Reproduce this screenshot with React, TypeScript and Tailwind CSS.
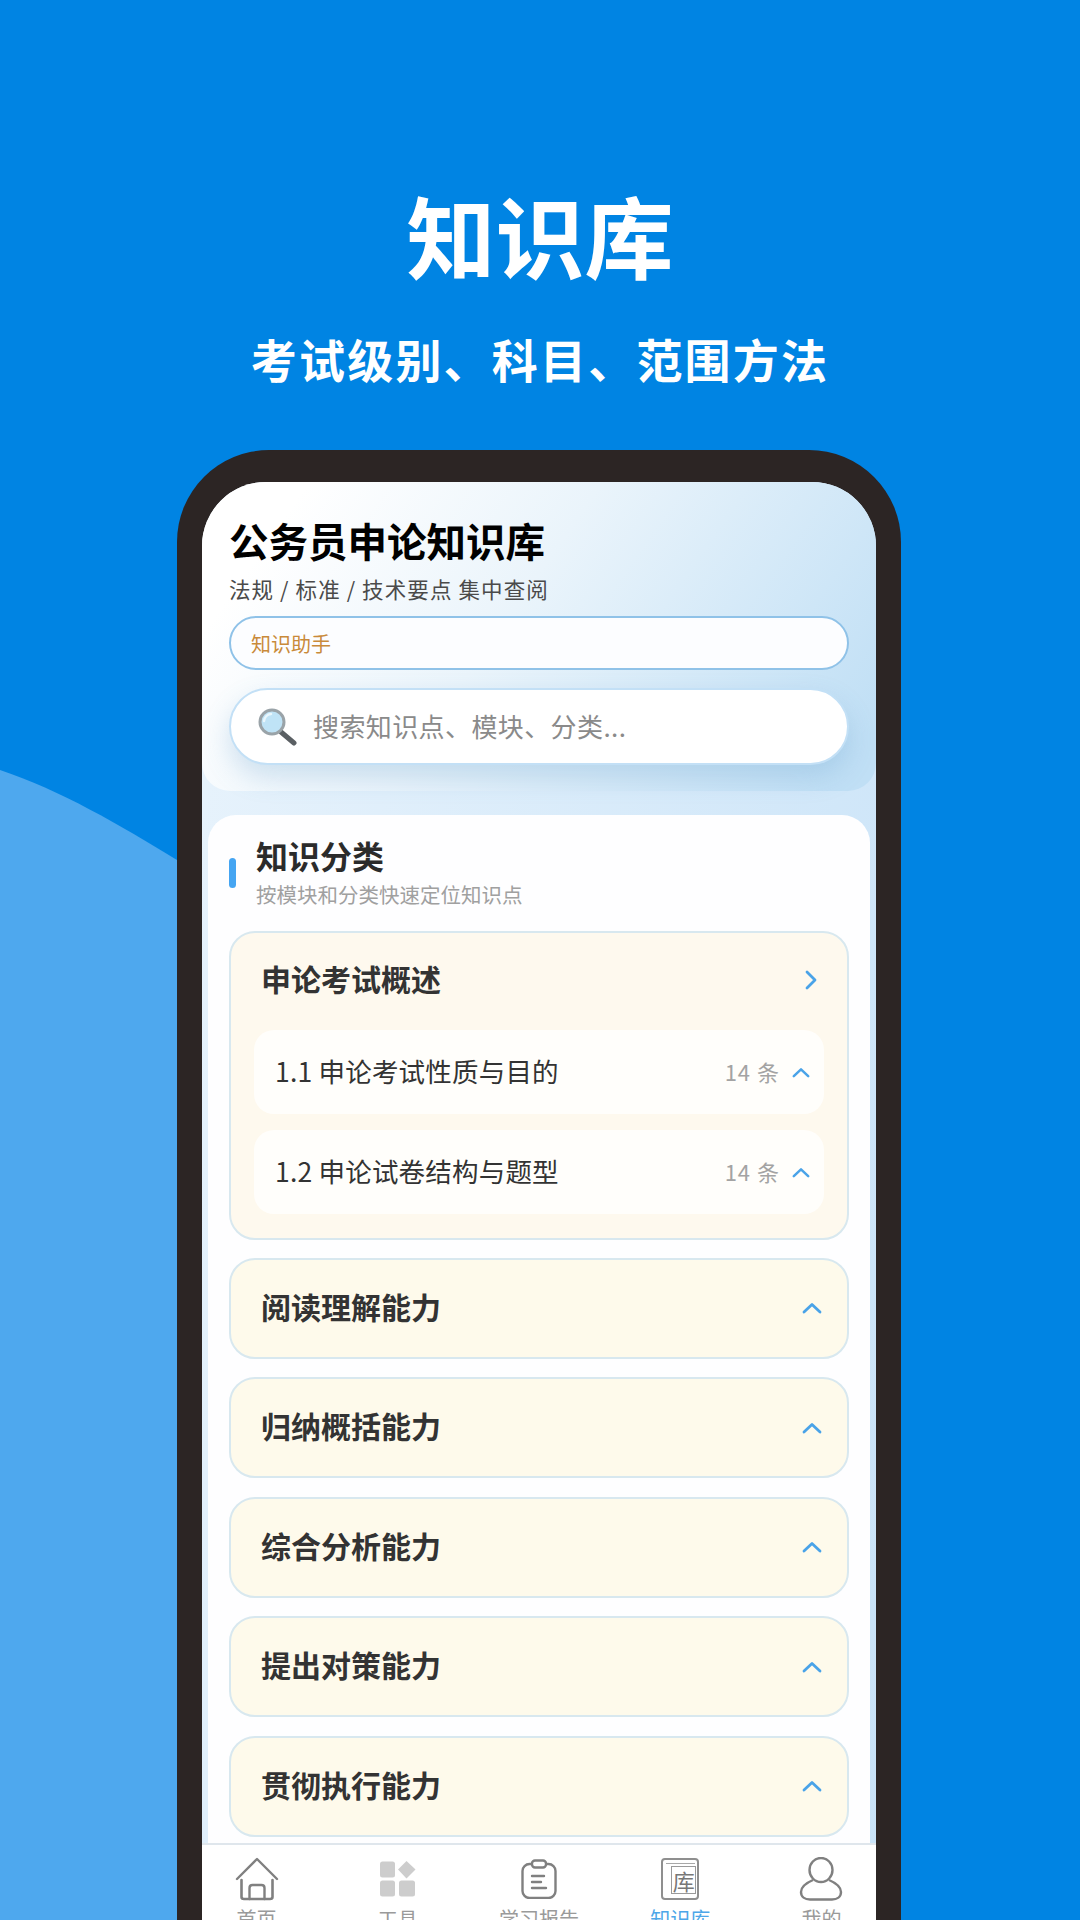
const FONT = "font-['Noto_Sans_CJK_SC','Noto_Sans',sans-serif]"

function ChevronUp({ className }: { className: string }) {
  return (
    <svg viewBox="0 0 20 12" fill="none" className={className}>
      <path d="M2 10 L10 2.5 L18 10" stroke="#4aa3e8" strokeWidth="2.8" strokeLinecap="round" strokeLinejoin="round" />
    </svg>
  )
}

function Magnifier() {
  return (
    <svg viewBox="0 0 40 38" className="w-[40px] h-[38px] shrink-0">
      <path d="M24 24 L37 35" stroke="#5a5f63" strokeWidth="5" strokeLinecap="round" />
      <circle cx="15" cy="14" r="12" fill="#bfe3f6" stroke="#9aa3a8" strokeWidth="3" />
      <path d="M7 13 A8 8 0 0 1 14 6" stroke="#eaf7fd" strokeWidth="2.5" fill="none" strokeLinecap="round" />
    </svg>
  )
}

function HomeIcon() {
  return (
    <svg viewBox="0 0 44 44" fill="none" stroke="#808080" strokeWidth="2.4" strokeLinecap="round" strokeLinejoin="round" className="w-[44px] h-[44px]">
      <path d="M2 22 L22 2 L42 22" />
      <path d="M6.500 23 V40 Q6.500 42 9 42 H35 Q37.500 42 37.500 40 V23" strokeWidth="2.6" />
      <path d="M14.500 42 V31 Q14.500 28 17.500 28 H26.500 Q29.500 28 29.500 31 V42" />
    </svg>
  )
}

function ToolsIcon() {
  return (
    <svg viewBox="0 0 36 36" fill="#cdcdcd" className="w-[36px] h-[36px]">
      <rect x="0" y="0.500" width="15" height="16" rx="2.500" />
      <path d="M26.500 0 L35.500 8.500 L26.500 17.500 L18 8.500 Z" />
      <rect x="0" y="19.500" width="15" height="16" rx="2.500" />
      <rect x="19" y="19.500" width="16" height="16" rx="2.500" />
    </svg>
  )
}

function ReportIcon() {
  return (
    <svg viewBox="0 0 36 40" fill="none" stroke="#808080" strokeWidth="2.4" strokeLinecap="round" className="w-[36px] h-[40px]">
      <rect x="1.500" y="5" width="33" height="34" rx="7" />
      <rect x="11" y="1.500" width="14" height="7" rx="3" fill="#fff" />
      <path d="M11 17 H23 M11 23 H20 M11 29 H25" />
    </svg>
  )
}

function LibraryIcon() {
  return (
    <div className="relative w-[38px] h-[42px] rounded-[4px] border-2 border-[#8f8f8f] bg-white">
      <div className="absolute left-[3px] top-[1px] right-[2px] h-[3px] border-b border-[#a8a8a8]" />
      <div className="absolute left-[8px] right-[1px] top-[6px] bottom-[4px] border border-[#9a9a9a] flex items-center justify-center">
        <span className="text-[22px] leading-none text-[#777]">库</span>
      </div>
    </div>
  )
}

function PersonIcon() {
  return (
    <svg viewBox="0 0 44 44" fill="none" stroke="#808080" strokeWidth="2.4" className="w-[44px] h-[44px]">
      <ellipse cx="22" cy="13" rx="11.500" ry="12" />
      <path d="M14 23 C7 26 2 30 2 35 C2 40 6 42.500 11 42.500 H33 C38 42.500 42 40 42 35 C42 30 37 26 30 23" />
    </svg>
  )
}

const collapsed = ['阅读理解能力', '归纳概括能力', '综合分析能力', '提出对策能力', '贯彻执行能力']
const subItems = ['1.1 申论考试性质与目的', '1.2 申论试卷结构与题型']

const navItems = [
  { label: '首页', icon: <HomeIcon />, active: false },
  { label: '工具', icon: <ToolsIcon />, active: false },
  { label: '学习报告', icon: <ReportIcon />, active: false },
  { label: '知识库', icon: <LibraryIcon />, active: true },
  { label: '我的', icon: <PersonIcon />, active: false },
]

export default function App() {
  return (
    <div className={`${FONT} relative w-[1080px] h-[1920px] overflow-hidden bg-[#0084e3]`}>
      <svg viewBox="0 0 1080 1920" className="absolute inset-0 w-[1080px] h-[1920px]">
        <path d="M0 770 C60 790 120 825 177 860 L177 1920 L0 1920 Z" fill="#4ea8ee" />
      </svg>

      <div className="relative flex flex-col items-center">
        <h1 className="mt-[174px] text-[89px] leading-[120px] font-bold text-white">知识库</h1>
        <p className="mt-[32px] text-[46px] leading-[64px] font-bold tracking-[2.2px] text-white">考试级别、科目、范围方法</p>

        <div className="mt-[60px] mr-[2px] w-[724px] h-[1500px] rounded-t-[92px] bg-[#2c2524] px-[25px] pt-[32px]">
          <div className="h-[1451px] rounded-t-[64px] overflow-hidden flex flex-col bg-[linear-gradient(100deg,#e8f3fc,#c9e3f8)]">
            <div className="h-[309px] shrink-0 rounded-b-[28px] px-[27px] pt-[33px] bg-[linear-gradient(125deg,#ffffff_12%,#eaf4fb_45%,#c0dff5_95%)]">
              <h2 className="text-[39.500px] leading-[50px] font-bold text-black">公务员申论知识库</h2>
              <p className="mt-[8px] text-[21.500px] leading-[32px] tracking-[1.100px] text-[#4a4a4a]">法规 / 标准 / 技术要点 集中查阅</p>
              <div className="mt-[11px] h-[54px] rounded-full border-2 border-[#8fc2e8] bg-[#fcfdff] flex items-center pl-[20px] pt-[2px]">
                <span className="text-[20px] text-[#c98a3a]">知识助手</span>
              </div>
              <div className="mt-[18px] h-[77px] rounded-full border-2 border-[#c3e0f6] bg-white shadow-[0_12px_26px_rgba(90,150,200,0.25)] flex items-center pl-[26px] gap-[16px]">
                <Magnifier />
                <span className="text-[26px] pb-[2px] tracking-[0.4px] text-[#8a8a8a]">搜索知识点、模块、分类...</span>
              </div>
            </div>

            <div className="flex-1 min-h-0 mt-[24px] mx-[6px] rounded-t-[28px] bg-[#fefeff] px-[21px] pt-[20px] overflow-hidden">
              <div className="flex items-center gap-[20px]">
                <div className="w-[7px] h-[30px] mt-[2px] rounded-full bg-[#45a5f2]" />
                <div>
                  <h3 className="text-[32px] leading-[40px] font-bold text-[#2b2b2b]">知识分类</h3>
                  <p className="mt-[5px] text-[20.500px] leading-[28px] text-[#a0a0a0]">按模块和分类快速定位知识点</p>
                </div>
              </div>

              <div className="mt-[23px] flex flex-col gap-[18.500px]">
                <div className="h-[309px] -mb-[1px] shrink-0 rounded-[26px] border-2 border-[#d8e8ef] bg-[#fef9ee] px-[23px]">
                  <div className="h-[97px] flex items-center justify-between pl-[7px] pr-[7px] pb-[6px]">
                    <span className="text-[30px] font-bold text-[#333]">申论考试概述</span>
                    <svg viewBox="0 0 12 20" fill="none" className="w-[12px] h-[20px] mt-[2px]">
                      <path d="M2 2 L10 10 L2 18" stroke="#4aa3e8" strokeWidth="2.8" strokeLinecap="round" strokeLinejoin="round" />
                    </svg>
                  </div>
                  <div className="flex flex-col gap-[16px]">
                    {subItems.map((item) => (
                      <div key={item} className="h-[84px] rounded-[20px] bg-[#fffefb] flex items-center justify-between pl-[21px] pr-[14px]">
                        <span className="text-[26.500px] pb-[3px] tracking-[0.2px] text-[#333]">{item}</span>
                        <div className="flex items-center gap-[12px]">
                          <span className="text-[22px] pb-[2px] tracking-[1px] text-[#a3a3a3]">14 条</span>
                          <ChevronUp className="w-[18px] h-[11px]" />
                        </div>
                      </div>
                    ))}
                  </div>
                </div>

                {collapsed.map((name) => (
                  <div key={name} className="h-[101px] shrink-0 rounded-[26px] border-2 border-[#d8e8ef] bg-[#fefaeb] flex items-center justify-between pl-[30px] pr-[25px]">
                    <span className="text-[30px] pb-[4px] font-bold text-[#333]">{name}</span>
                    <ChevronUp className="w-[20px] h-[12px]" />
                  </div>
                ))}
              </div>
            </div>

            <nav className="h-[90px] shrink-0 border-t-2 border-[#dfe6ec] bg-white pt-[11px]">
              <div className="flex -mx-[16px]">
                {navItems.map((item) => (
                  <div key={item.label} className="flex-1 flex flex-col items-center">
                    <div className="h-[46px] flex items-center justify-center">{item.icon}</div>
                    <span className={`mt-[4px] text-[20px] leading-[26px] ${item.active ? 'text-[#4da6e8]' : 'text-[#9a9a9a]'}`}>{item.label}</span>
                  </div>
                ))}
              </div>
            </nav>
          </div>
        </div>
      </div>
    </div>
  )
}
